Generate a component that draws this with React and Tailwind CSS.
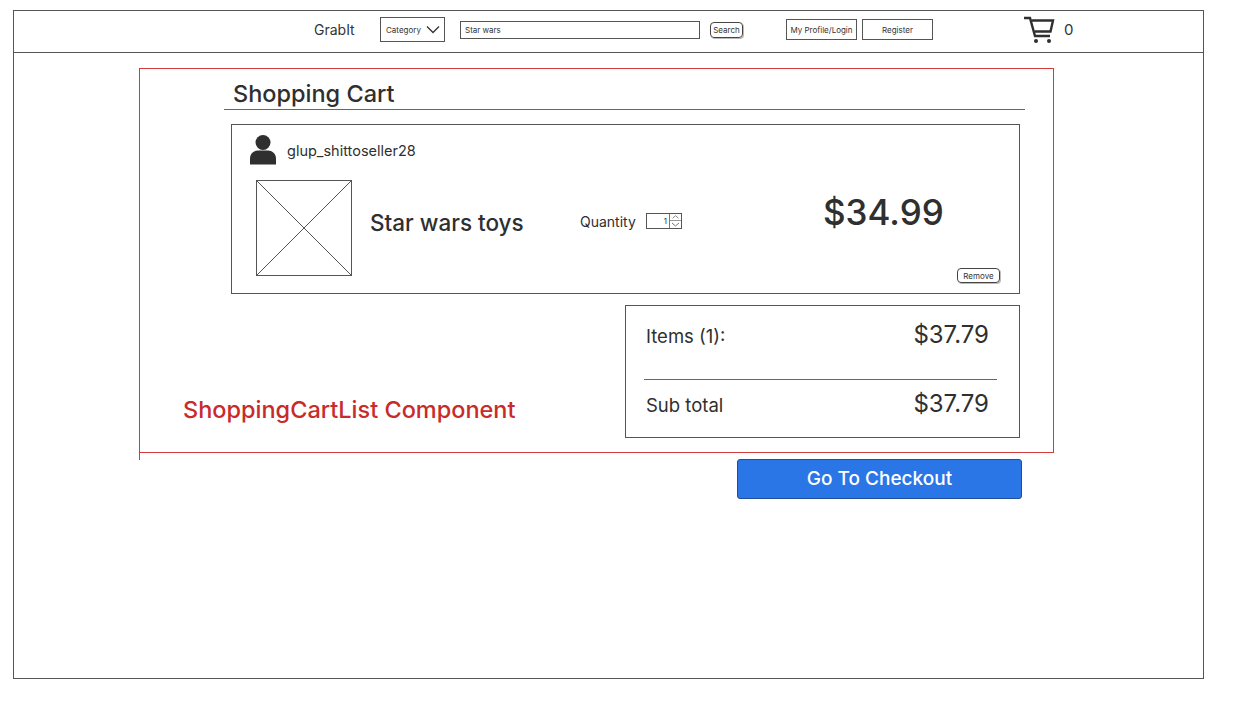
function CartIcon() {
  return (
    <svg width="31" height="28" viewBox="0 0 31 28" fill="none" stroke="#2f2f2f" strokeWidth="2.4">
      <path d="M0 2h6l5 18h15" />
      <path d="M7.5 4.5H29l-2.5 11H10.5" />
      <circle cx="12" cy="25" r="2" fill="#2f2f2f" stroke="none" />
      <circle cx="25" cy="25" r="2" fill="#2f2f2f" stroke="none" />
    </svg>
  );
}

function UserIcon() {
  return (
    <svg width="26" height="30" viewBox="0 0 26 30" fill="#2f2f2f">
      <circle cx="13" cy="7.5" r="7.5" />
      <path d="M0 29.5v-6c0-5 4-8 8-8h10c4 0 8 3 8 8v6z" />
    </svg>
  );
}

function Placeholder() {
  return (
    <svg width="96" height="96" viewBox="0 0 96 96" fill="none" stroke="#555" strokeWidth="1" className="shrink-0">
      <rect x="0.5" y="0.5" width="95" height="95" />
      <path d="M0 0l96 96M96 0L0 96" />
    </svg>
  );
}

function Price({ children }) {
  return <span className="text-[24px] leading-none text-[#2f2f2f]">{children}</span>;
}

function QuantityInput() {
  return (
    <div className="flex h-[16px] w-[36px] border border-[#555] text-[8px] text-[#333]">
      <span className="flex-1 pr-[2px] text-right leading-[14px]">1</span>
      <div className="flex w-[12px] flex-col border-l border-[#777]">
        <svg width="11" height="7" viewBox="0 0 11 7" fill="none" stroke="#777" className="border-b border-[#999]">
          <path d="M2 5l3.5-3L9 5" />
        </svg>
        <svg width="11" height="7" viewBox="0 0 11 7" fill="none" stroke="#777">
          <path d="M2 2l3.5 3L9 2" />
        </svg>
      </div>
    </div>
  );
}

function CartItem() {
  return (
    <div className="ml-[91px] mt-[14px] h-[170px] w-[789px] border border-[#555] pl-[18px] pt-[10px]">
      <div className="flex h-[30px] items-center gap-[11px]">
        <UserIcon />
        <span className="pt-[2px] text-[14.5px] text-[#2f2f2f]">glup_shittoseller28</span>
      </div>
      <div className="mt-[15px] flex">
        <div className="ml-[6px]">
          <Placeholder />
        </div>
        <span className="ml-[18px] mt-[25px] w-[210px] text-[22.5px] font-medium leading-[36px] text-[#2f2f2f]">Star wars toys</span>
        <div className="mt-[31px] flex h-[20px] items-center gap-[10px]">
          <span className="w-[56px] text-[14px] text-[#2f2f2f]">Quantity</span>
          <QuantityInput />
        </div>
        <div className="ml-auto flex w-[196px] flex-col">
          <span className="pt-[2px] text-[35px] font-medium leading-[60px] text-[#2f2f2f]">$34.99</span>
          <button className="ml-auto mr-[19px] mt-[26px] h-[15px] w-[43px] rounded-[4px] border border-[#444] text-[8px] leading-none text-[#333] shadow-[1px_1px_0_#bbb]">
            Remove
          </button>
        </div>
      </div>
    </div>
  );
}

function Summary() {
  return (
    <div className="h-[133px] w-[395px] border border-[#555]">
      <div className="flex h-[73px] justify-between pl-[20px] pr-[30px] pt-[17px]">
        <span className="text-[18.5px] leading-[26px] text-[#2f2f2f]">Items (1):</span>
        <Price>$37.79</Price>
      </div>
      <div className="ml-[18px] h-px w-[353px] bg-[#666]" />
      <div className="flex justify-between pl-[20px] pr-[30px] pt-[12px]">
        <span className="text-[18.5px] leading-[26px] text-[#2f2f2f]">Sub total</span>
        <Price>$37.79</Price>
      </div>
    </div>
  );
}

export default function App() {
  return (
    <div className="h-[703px] w-[1233px] bg-white pl-[13px] pt-[10px] font-['Inter',sans-serif]">
      <div className="h-[669px] w-[1191px] border border-[#555]">
        <header className="flex h-[42px] items-center border-b border-[#555] pb-[4px] pl-[300px] text-[#333]">
          <span className="w-[66px] text-[14px]">GrabIt</span>
          <div className="flex h-[25px] w-[65px] items-center justify-between border border-[#555] pl-[5px] pr-[4px] text-[8px]">
            Category
            <svg width="14" height="9" viewBox="0 0 14 9" fill="none" stroke="#333" strokeWidth="1.3">
              <path d="M1 1.5l6 6 6-6" />
            </svg>
          </div>
          <div className="ml-[15px] h-[18px] w-[240px] border border-[#555] pl-[4px] text-[8px] leading-[16px]">Star wars</div>
          <button className="ml-[10px] h-[16px] w-[33px] rounded-[4px] border border-[#444] text-[8px] leading-none shadow-[1px_1px_0_#bbb]">
            Search
          </button>
          <div className="ml-[43px] flex h-[21px] w-[71px] items-center justify-center border border-[#555] text-[8px]">My Profile/Login</div>
          <div className="ml-[5px] flex h-[21px] w-[71px] items-center justify-center border border-[#555] text-[8px]">Register</div>
          <div className="ml-[91px]">
            <CartIcon />
          </div>
          <span className="ml-[9px] pt-[2px] text-[15px]">0</span>
        </header>

        <main className="relative ml-[125px] mt-[15px] w-[915px]">
          <section className="h-[385px] border border-[#d33a3a]">
            <h1 className="ml-[93px] mt-[7px] text-[23.5px] font-medium leading-[36px] text-[#2f2f2f]">Shopping Cart</h1>
            <div className="ml-[84px] mt-[-3px] h-px w-[801px] bg-[#666]" />
            <CartItem />
            <div className="mt-[11px] flex pl-[43px]">
              <p className="w-[442px] pt-[87px] text-[23.5px] font-medium leading-[36px] text-[#c92a2a]">ShoppingCartList Component</p>
              <Summary />
            </div>
          </section>
          <div className="absolute left-0 top-[384px] h-[8px] w-px bg-[#d33a3a]" />
          <div className="ml-[598px] mt-[6px] flex h-[40px] w-[285px] items-center justify-center rounded-[3px] border border-[#1d4f9c] bg-[#2a76e6] text-[19px] font-medium text-white">
            Go To Checkout
          </div>
        </main>
      </div>
    </div>
  );
}
